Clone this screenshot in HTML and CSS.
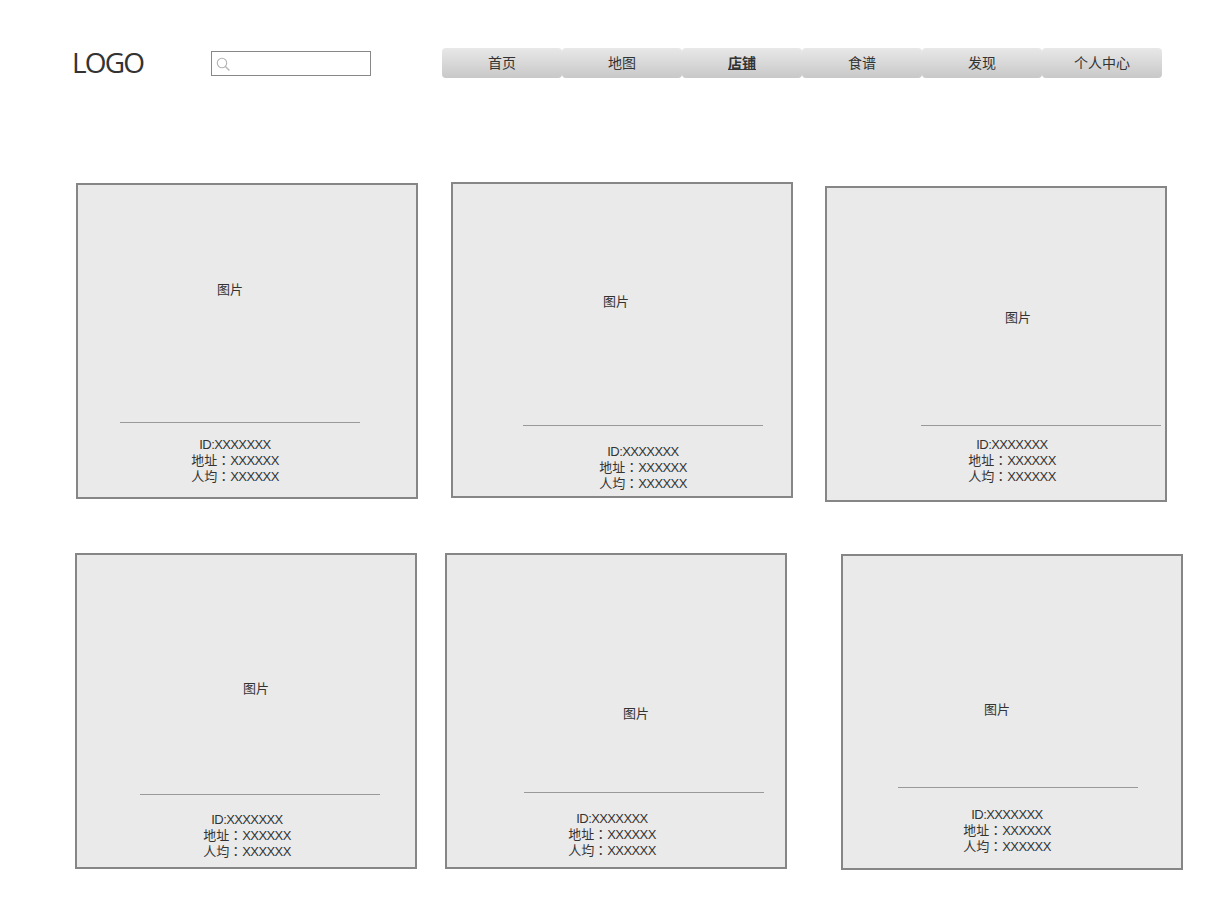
FILE: index.html
```html
<!DOCTYPE html>
<html lang="zh-CN">
<head>
  <meta charset="UTF-8">
  <title>店铺</title>
  <link rel="stylesheet" href="styles.css">
</head>
<body>
  <header class="top-bar">
    <div class="logo">LOGO</div>
    <div class="search">
      <svg class="search-icon" width="15" height="15" viewBox="0 0 15 15">
        <circle cx="6" cy="6" r="4.7" fill="none" stroke="#b4b4b4" stroke-width="1.1"/>
        <line x1="9.4" y1="9.5" x2="13.4" y2="13.5" stroke="#b4b4b4" stroke-width="1.3"/>
      </svg>
    </div>
    <nav class="nav">
      <a class="nav-item">首页</a>
      <a class="nav-item">地图</a>
      <a class="nav-item active">店铺</a>
      <a class="nav-item">食谱</a>
      <a class="nav-item">发现</a>
      <a class="nav-item">个人中心</a>
    </nav>
  </header>

  <section class="row row-1">
    <div class="card card-1">
      <div class="card-label">图片</div>
      <div class="card-rule"></div>
      <div class="card-info" lang="zh-TW"><p><span class="val">ID:XXXXXXX</span></p><p>地址：<span class="val">XXXXXX</span></p><p>人均：<span class="val">XXXXXX</span></p></div>
    </div>
    <div class="card card-2">
      <div class="card-label">图片</div>
      <div class="card-rule"></div>
      <div class="card-info" lang="zh-TW"><p><span class="val">ID:XXXXXXX</span></p><p>地址：<span class="val">XXXXXX</span></p><p>人均：<span class="val">XXXXXX</span></p></div>
    </div>
    <div class="card card-3">
      <div class="card-label">图片</div>
      <div class="card-rule"></div>
      <div class="card-info" lang="zh-TW"><p><span class="val">ID:XXXXXXX</span></p><p>地址：<span class="val">XXXXXX</span></p><p>人均：<span class="val">XXXXXX</span></p></div>
    </div>
  </section>

  <section class="row row-2">
    <div class="card card-4">
      <div class="card-label">图片</div>
      <div class="card-rule"></div>
      <div class="card-info" lang="zh-TW"><p><span class="val">ID:XXXXXXX</span></p><p>地址：<span class="val">XXXXXX</span></p><p>人均：<span class="val">XXXXXX</span></p></div>
    </div>
    <div class="card card-5">
      <div class="card-label">图片</div>
      <div class="card-rule"></div>
      <div class="card-info" lang="zh-TW"><p><span class="val">ID:XXXXXXX</span></p><p>地址：<span class="val">XXXXXX</span></p><p>人均：<span class="val">XXXXXX</span></p></div>
    </div>
    <div class="card card-6">
      <div class="card-label">图片</div>
      <div class="card-rule"></div>
      <div class="card-info" lang="zh-TW"><p><span class="val">ID:XXXXXXX</span></p><p>地址：<span class="val">XXXXXX</span></p><p>人均：<span class="val">XXXXXX</span></p></div>
    </div>
  </section>
</body>
</html>
```

FILE: styles.css
```css
/* Overall Page Styling */
body {
  margin: 0;
  background: #fff;
  color: #333;
  font-family: "Open Sans", "Noto Sans CJK SC", sans-serif;
  font-size: 13px;
}

/* Header */
.top-bar {
  display: flex;
  align-items: center;
  height: 30px;
  margin-top: 48px;
  padding-left: 72px;
}

.logo {
  width: 139px;
  margin-top: -2px;
  font-size: 28px;
  letter-spacing: -1.8px;
  line-height: 30px;
}

.search {
  box-sizing: border-box;
  display: flex;
  align-items: center;
  width: 160px;
  height: 25px;
  margin-top: 1px;
  padding-left: 5px;
  background: #fff;
  border: 1px solid #888;
}

.search-icon {
  margin-top: 2px;
  margin-left: -1px;
}

.nav {
  display: flex;
  margin-left: 71px;
}

.nav-item {
  width: 120px;
  height: 30px;
  line-height: 30px;
  text-align: center;
  font-size: 14px;
  border-radius: 4px;
  background: linear-gradient(180deg, #e8e8e8, #c8c8c8);
}

.nav-item.active {
  font-weight: 700;
  text-decoration: underline;
}

/* Cards */
.row {
  display: flex;
  align-items: flex-start;
}

.row-1 {
  margin-top: 104px;
}

.row-2 {
  margin-top: 51px;
}

.card {
  box-sizing: border-box;
  display: flex;
  flex-direction: column;
  align-items: flex-start;
  width: 342px;
  height: 316px;
  background: #eaeaea;
  border: 2px solid #868686;
}

.card-label {
  line-height: 18px;
}

.card-rule {
  width: 240px;
  height: 1px;
  background: #999;
}

.card-info {
  width: 120px;
  text-align: center;
  line-height: 16px;
  font-family: "Liberation Sans", "Noto Sans CJK TC", sans-serif;
  white-space: nowrap;
}

.card-info p {
  margin: 0;
}

.val {
  letter-spacing: -0.6px;
}

.card-1 { margin: 1px 0 0 76px; }
.card-1 .card-label { margin: 95px 0 0 139px; }
.card-1 .card-rule { margin: 124px 0 0 42px; }
.card-1 .card-info { margin: 14px 0 0 97px; }

.card-2 { margin: 0 0 0 33px; }
.card-2 .card-label { margin: 108px 0 0 150px; }
.card-2 .card-rule { margin: 115px 0 0 70px; }
.card-2 .card-info { margin: 18px 0 0 130px; }

.card-3 { margin: 4px 0 0 32px; }
.card-3 .card-label { margin: 120px 0 0 178px; }
.card-3 .card-rule { margin: 99px 0 0 94px; }
.card-3 .card-info { margin: 11px 0 0 125px; }

.card-4 { margin: 0 0 0 75px; }
.card-4 .card-label { margin: 124px 0 0 166px; }
.card-4 .card-rule { margin: 97px 0 0 63px; }
.card-4 .card-info { margin: 17px 0 0 110px; }

.card-5 { margin: 0 0 0 28px; }
.card-5 .card-label { margin: 149px 0 0 176px; }
.card-5 .card-rule { margin: 70px 0 0 77px; }
.card-5 .card-info { margin: 18px 0 0 105px; }

.card-6 { margin: 1px 0 0 54px; }
.card-6 .card-label { margin: 144px 0 0 141px; }
.card-6 .card-rule { margin: 69px 0 0 55px; }
.card-6 .card-info { margin: 19px 0 0 104px; }
```
